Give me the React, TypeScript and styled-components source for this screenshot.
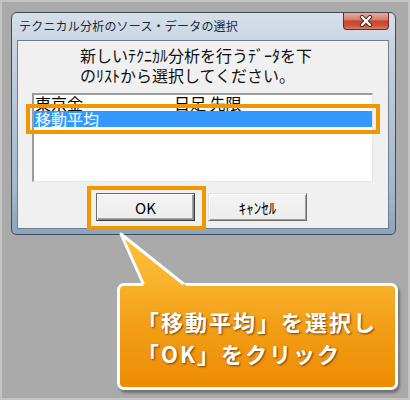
import React from "react";
import styled, { createGlobalStyle } from "styled-components";

const GlobalStyle = createGlobalStyle`
  html, body { margin: 0; padding: 0; background: #aaaaaa; }
  body { font-family: "Noto Sans CJK JP", "Noto Sans", sans-serif; }
`;

const Page = styled.div`
  position: relative;
  width: 410px;
  height: 400px;
  box-sizing: border-box;
  border: 2px solid #c4c4c4;
  background: #aaaaaa;
  padding: 10px 0 0 9px;
  overflow: hidden;
`;

const Window = styled.div`
  width: 385px;
  height: 223px;
  box-sizing: border-box;
  border: 1px solid #3f4b58;
  border-radius: 6px 6px 5px 5px;
  background: linear-gradient(
    to bottom,
    #d6e0ea 0%,
    #c8d5e2 14%,
    #b4c5d7 45%,
    #a4b7cc 80%,
    #8ea4bc 100%
  );
  padding: 0 6px 5px 5px;
  display: flex;
  flex-direction: column;
`;

const TitleBar = styled.div`
  height: 27px;
  display: flex;
  justify-content: space-between;
  align-items: flex-start;
`;

const Title = styled.span`
  font-size: 12px;
  line-height: 14px;
  color: #1b2838;
  margin: 6px 0 0 2px;
  letter-spacing: 0.2px;
`;

const CloseButton = styled.div`
  width: 46px;
  height: 17px;
  box-sizing: border-box;
  border: 1px solid #6b2a22;
  border-top: none;
  border-radius: 0 0 4px 4px;
  background: linear-gradient(
    to bottom,
    #e8a89c 0%,
    #d9806f 40%,
    #c44530 52%,
    #ca543c 80%,
    #dd8068 100%
  );
  display: flex;
  align-items: center;
  justify-content: center;
`;

const Client = styled.div`
  flex: 1;
  background: #f0f0f0;
  border: 1px solid #6f7d8c;
  display: flex;
  flex-direction: column;
`;

const Prompt = styled.div`
  margin: 4px 0 0 62px;
  font-size: 16px;
  line-height: 20px;
  color: #111;
  white-space: nowrap;
`;

const ListBox = styled.div`
  position: relative;
  margin: 8px 0 0 14px;
  width: 341px;
  height: 89px;
  box-sizing: border-box;
  border-style: solid;
  border-width: 2px 1px 1px 2px;
  border-color: #9c9c9c #e6e6e6 #e6e6e6 #9c9c9c;
  background: #ffffff;
`;

const Row = styled.div<{ $selected?: boolean }>`
  display: grid;
  grid-template-columns: 139px 1fr;
  height: 16px;
  line-height: 16px;
  font-size: 16px;
  padding-left: 1px;
  color: ${(p) => (p.$selected ? "#ffffff" : "#000000")};
  background: ${(p) => (p.$selected ? "#3399ff" : "transparent")};
  white-space: nowrap;
  overflow: hidden;
`;

const Highlight = styled.div<{ $l: number; $t: number; $w: number; $h: number }>`
  position: absolute;
  left: ${(p) => p.$l}px;
  top: ${(p) => p.$t}px;
  width: ${(p) => p.$w}px;
  height: ${(p) => p.$h}px;
  box-sizing: border-box;
  border: 4px solid #f29600;
  z-index: 2;
  pointer-events: none;
`;

const ButtonRow = styled.div`
  display: flex;
  gap: 13px;
  margin: 11px 0 0 78px;
`;

const ButtonSlot = styled.div`
  position: relative;
`;

const Button = styled.div<{ $default?: boolean }>`
  width: 99px;
  height: 28px;
  box-sizing: border-box;
  background: linear-gradient(#f4f4f4, #ececec);
  display: flex;
  align-items: center;
  justify-content: center;
  font-size: 15px;
  color: #000;
  border: 1px solid;
  border-color: ${(p) =>
    p.$default ? "#6a6a6a #3a3a3a #3a3a3a #6a6a6a" : "#e2e2e2 #6c6c6c #6c6c6c #e2e2e2"};
  box-shadow: ${(p) =>
    p.$default
      ? "inset 1px 1px #ffffff, inset -1px -1px #8a8a8a, inset -2px -2px #a0a0a0"
      : "inset 1px 1px #ffffff, inset -1px -1px #a0a0a0"};
`;

const Callout = styled.div`
  position: relative;
  margin: 48px 0 0 106px;
  width: 281px;
  height: 107px;
  box-sizing: border-box;
  border: 3px solid #ffffff;
  border-radius: 7px;
  background: linear-gradient(to bottom, #f8b02a 0%, #f29c14 45%, #ee8c04 100%);
  box-shadow: 2px 3px 3px rgba(0, 0, 0, 0.35);
  padding: 19px 0 0 17px;
`;

const CalloutText = styled.div`
  font-size: 22px;
  line-height: 32px;
  font-weight: 700;
  color: #ffffff;
  letter-spacing: 2px;
  white-space: nowrap;
  text-shadow: 1px 1px 2px rgba(90, 45, 0, 0.8);
`;

const Tail = styled.svg`
  position: absolute;
  left: -3px;
  top: -56px;
  overflow: visible;
`;

export default function App() {
  return (
    <>
      <GlobalStyle />
      <Page>
        <Window>
          <TitleBar>
            <Title>テクニカル分析のソース・データの選択</Title>
            <CloseButton>
              <svg width="14" height="12" viewBox="0 0 14 12">
                <path
                  d="M3 2 L11 10 M11 2 L3 10"
                  stroke="#4a2a24"
                  strokeWidth="4.2"
                  strokeLinecap="round"
                />
                <path
                  d="M3 2 L11 10 M11 2 L3 10"
                  stroke="#ffffff"
                  strokeWidth="2.4"
                  strokeLinecap="round"
                />
              </svg>
            </CloseButton>
          </TitleBar>
          <Client>
            <Prompt>
              新しいﾃｸﾆｶﾙ分析を行うﾃﾞｰﾀを下
              <br />
              のﾘｽﾄから選択してください。
            </Prompt>
            <ListBox>
              <Row>
                <span>東京金</span>
                <span>日足 先限</span>
              </Row>
              <Row $selected>
                <span>移動平均</span>
                <span />
              </Row>
              <Highlight $l={-8} $t={9} $w={354} $h={30} />
            </ListBox>
            <ButtonRow>
              <ButtonSlot>
                <Button $default>OK</Button>
                <Highlight $l={-9} $t={-7} $w={119} $h={44} />
              </ButtonSlot>
              <ButtonSlot>
                <Button>ｷｬﾝｾﾙ</Button>
              </ButtonSlot>
            </ButtonRow>
          </Client>
        </Window>
        <Callout>
          <Tail width="80" height="62" viewBox="0 0 80 62">
            <defs>
              <linearGradient id="tailg" x1="0" y1="0" x2="0" y2="1">
                <stop offset="0" stopColor="#fcc03a" />
                <stop offset="1" stopColor="#f8b02a" />
              </linearGradient>
            </defs>
            <polygon points="4,4 28.6,60 74.8,60" fill="url(#tailg)" />
            <path
              d="M26.3 54 L4 4 L66.5 54"
              fill="none"
              stroke="#ffffff"
              strokeWidth="3"
              strokeLinejoin="round"
            />
          </Tail>
          <CalloutText>
            「移動平均」を選択し
            <br />
            「OK」をクリック
          </CalloutText>
        </Callout>
      </Page>
    </>
  );
}
